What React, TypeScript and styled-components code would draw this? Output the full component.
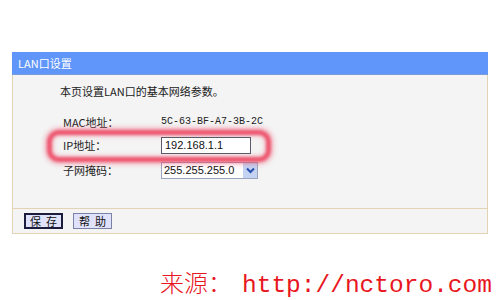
import React from "react";
import styled, { createGlobalStyle } from "styled-components";

const Global = createGlobalStyle`
  html, body { margin: 0; padding: 0; background: #ffffff; }
  body { width: 500px; height: 300px; overflow: hidden; font-family: "Noto Sans CJK SC", "Liberation Sans", sans-serif; }
`;

const Page = styled.div`
  width: 500px;
  height: 300px;
  padding: 52px 0 0 12px;
  box-sizing: border-box;
  display: flex;
  flex-direction: column;
`;

const Panel = styled.div`
  width: 476px;
  height: 184px;
  box-sizing: border-box;
  border: 1px solid #e2d3b4;
  border-top: none;
  background: #f4f4f4;
  display: flex;
  flex-direction: column;
`;

const Header = styled.div`
  height: 22px;
  margin: 0 -1px;
  background: #6096fa;
  color: #ffffff;
  font-size: 11px;
  line-height: 22px;
  padding-left: 6px;
  border-bottom: 1px solid #7a9ad8;
`;

const Body = styled.div`
  flex: 1;
  padding: 7px 0 0 47px;
  font-size: 11px;
  color: #1a1a1a;
`;

const Intro = styled.div`
  height: 18px;
  line-height: 18px;
  margin-bottom: 10px;
`;

const Rows = styled.div`
  display: grid;
  grid-template-columns: 98px auto;
  grid-template-rows: 23px 24px 26px;
  align-items: center;
  padding-left: 3px;
  position: relative;
`;

const Label = styled.div`
  font-size: 11px;
  color: #222;
`;

const Value = styled.div`
  font-family: "Liberation Mono", monospace;
  font-size: 10px;
  color: #222;
`;

const Glow = styled.span`
  position: absolute;
  left: -13px;
  top: 20px;
  width: 214px;
  height: 22px;
  border: 5px solid rgba(235, 45, 75, 0.8);
  border-radius: 12px;
  box-shadow: 0 0 4px 2px rgba(240, 80, 110, 0.45), inset 0 0 4px 1px rgba(240, 80, 110, 0.4);
  filter: blur(1.5px);
  pointer-events: none;
`;

const TextBox = styled.div`
  width: 90px;
  height: 17px;
  box-sizing: border-box;
  border: 1px solid #5a5a6a;
  background: #fff;
  font-family: "Liberation Sans", sans-serif;
  font-size: 11px;
  line-height: 15px;
  padding-left: 3px;
  color: #111;
  position: relative;
  z-index: 1;
`;

const Select = styled.div`
  width: 97px;
  height: 17px;
  box-sizing: border-box;
  border: 1px solid #9aa6bf;
  background: #fff;
  display: flex;
  align-items: center;
  font-family: "Liberation Sans", sans-serif;
  font-size: 11px;
  color: #111;
  padding-left: 2px;
`;

const SelectText = styled.span`
  flex: 1;
`;

const Arrow = styled.span`
  width: 14px;
  height: 15px;
  background: #c4d3f2;
  display: flex;
  align-items: center;
  justify-content: center;
`;

const Footer = styled.div`
  height: 24px;
  border-top: 1px solid #e2d3b4;
  display: flex;
  align-items: center;
  gap: 10px;
  padding-left: 11px;
`;

const Button = styled.button<{ $active?: boolean }>`
  width: 39px;
  height: 16px;
  padding: 0;
  box-sizing: border-box;
  border: ${(p) => (p.$active ? "2px solid #1c1c3c" : "1px solid #7a82a8")};
  background: #dfe2fa;
  font-family: "Noto Sans CJK SC", sans-serif;
  font-size: 11px;
  line-height: 12px;
  white-space: nowrap;
  display: flex;
  align-items: center;
  justify-content: center;
  gap: 5px;
  color: #111;
`;

const Source = styled.div`
  margin-top: 34px;
  padding-left: 148px;
  color: #e8161e;
  font-size: 24px;
  line-height: 28px;
  white-space: nowrap;
  display: flex;
  align-items: baseline;
`;

const SourceCjk = styled.span`
  font-family: "Noto Sans CJK SC", serif;
  font-weight: 300;
`;

const SourceUrl = styled.span`
  font-family: "Liberation Mono", monospace;
  font-size: 24.5px;
  margin-left: 10px;
`;

export default function App() {
  return (
    <>
      <Global />
      <Page>
        <Panel>
          <Header>LAN口设置</Header>
          <Body>
            <Intro>本页设置LAN口的基本网络参数。</Intro>
            <Rows>
              <Glow />
              <Label>MAC地址：</Label>
              <Value>5C-63-BF-A7-3B-2C</Value>
              <Label>IP地址：</Label>
              <TextBox>192.168.1.1</TextBox>
              <Label>子网掩码：</Label>
              <Select>
                <SelectText>255.255.255.0</SelectText>
                <Arrow>
                  <svg width="9" height="7" viewBox="0 0 9 7">
                    <path d="M1 1.5 L4.5 5 L8 1.5" stroke="#2a4fb0" strokeWidth="2" fill="none" />
                  </svg>
                </Arrow>
              </Select>
            </Rows>
          </Body>
          <Footer>
            <Button $active><span>保</span><span>存</span></Button>
            <Button><span>帮</span><span>助</span></Button>
          </Footer>
        </Panel>
        <Source>
          <SourceCjk>来源：</SourceCjk>
          <SourceUrl>http://nctoro.com</SourceUrl>
        </Source>
      </Page>
    </>
  );
}
